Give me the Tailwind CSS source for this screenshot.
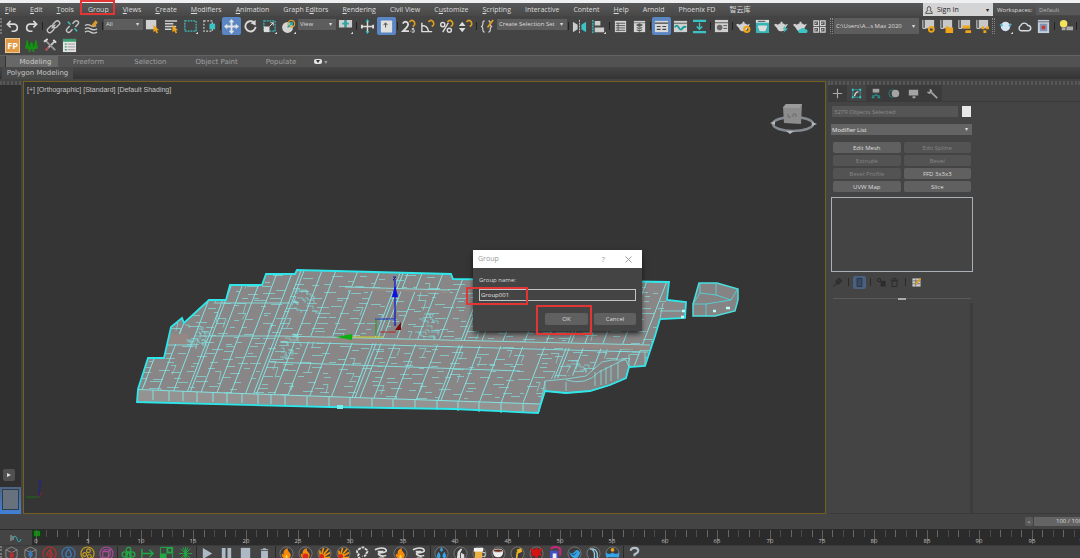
<!DOCTYPE html>
<html lang="en">
<head>
  <meta charset="UTF-8">
  <title>3ds Max - Group</title>
  <script src="https://cdn.jsdelivr.net/npm/@tailwindcss/browser@4"></script>
</head>
<body class="h-screen flex flex-col overflow-hidden bg-[#444] text-[#dcdcdc] font-['Open_Sans','Noto_Sans_CJK_SC',sans-serif] text-[7px] leading-[10px] border-t-3 border-[#eef0f2]">

  <!-- icon symbols -->
  <svg class="hidden" xmlns="http://www.w3.org/2000/svg">
    <defs>
      <symbol id="undo" viewBox="0 0 16 16"><path d="M6 2L2.500 5.500L6 9M3 5.500H10a3.800 3.800 0 0 1 0 7.500H7" fill="none" stroke="#d8d8d8" stroke-width="1.700"/></symbol>
      <symbol id="redo" viewBox="0 0 16 16"><path d="M10 2l3.500 3.500L10 9M13 5.500H6a3.800 3.800 0 0 0 0 7.500H9" fill="none" stroke="#d8d8d8" stroke-width="1.700"/></symbol>
      <symbol id="link" viewBox="0 0 16 16"><g fill="none" stroke="#c4c4c4" stroke-width="1.500"><rect x="7" y="3" width="8" height="5" rx="2.500" transform="rotate(-45 11 5.500)"/><rect x="1" y="8.500" width="8" height="5" rx="2.500" transform="rotate(-45 5 11)"/><path d="M6 10l4-4"/></g></symbol>
      <symbol id="unlink" viewBox="0 0 16 16"><g fill="none" stroke="#c4c4c4" stroke-width="1.500"><path d="M8 5l2.500-2.500a2.200 2.200 0 0 1 3.200 3.200L11 8.500M8 11l-2.500 2.500a2.200 2.200 0 0 1-3.200-3.200L5 7.500"/></g><path d="M3 3l3 3M10 10l3 3" stroke="#3cc" stroke-width="1.500"/></symbol>
      <symbol id="bind" viewBox="0 0 16 16"><path d="M1 7q3-2 6 0t6 0M1 10.500q3-2 6 0t7 0M1 14q3-2 6 0t7 0" fill="none" stroke="#c8c8c8" stroke-width="1.400"/><path d="M8 8l5-6M10 8l4-5" stroke="#d99a2b" stroke-width="2" fill="none"/></symbol>
      <symbol id="pick" viewBox="0 0 16 16"><path d="M1 1h11v10H1z" fill="#d0d0d0"/><path d="M9 6v8l2-1.500 1.500 3 1.500-1-1.500-2.500h2.500z" fill="#f0a518"/></symbol>
      <symbol id="pickname" viewBox="0 0 16 16"><path d="M1 2h13M1 5h9M1 8h12M1 11h7" stroke="#d0d0d0" stroke-width="1.600"/><path d="M9 6v8l2-1.500 1.500 3 1.500-1-1.500-2.500h2.500z" fill="#f0a518"/></symbol>
      <symbol id="rectsel" viewBox="0 0 16 16"><path d="M2 2h12v11H2z" fill="none" stroke="#3cbcbc" stroke-width="1.400" stroke-dasharray="2 1"/><path d="M16 16h-2.500L16 13.500z" fill="#ddd"/></symbol>
      <symbol id="window" viewBox="0 0 16 16"><path d="M2 2h9v11H2z" fill="none" stroke="#ccc" stroke-width="1.300" stroke-dasharray="2 1.500"/><path d="M8 5h6v6H8z" fill="#3cc4c4"/></symbol>
      <symbol id="move" viewBox="0 0 16 16"><path d="M8 0l3 3.500H9V7h3.500V5L16 8l-3.500 3V9H9v3.500h2L8 16l-3-3.500h2V9H3.500v2L0 8l3.500-3v2H7V3.500H5z" fill="#e4e4e4"/></symbol>
      <symbol id="rotate" viewBox="0 0 16 16"><path d="M11.500 3.500a5.500 5.500 0 1 0 2 5" fill="none" stroke="#d8d8d8" stroke-width="2"/><path d="M8 4.500L13.500 1v6z" fill="#d8d8d8"/></symbol>
      <symbol id="scale" viewBox="0 0 16 16"><path d="M2 2h12v11H2z" fill="none" stroke="#3cbcbc" stroke-width="1.300" stroke-dasharray="2 1"/><path d="M2 8h6v6H2z" fill="#ddd"/><path d="M8 8l4-4M9 4h3v3" fill="none" stroke="#ddd"/><path d="M16 16h-2.500L16 13.500z" fill="#ddd"/></symbol>
      <symbol id="place" viewBox="0 0 16 16"><circle cx="7" cy="9" r="5.800" fill="#d4d4d4"/><circle cx="11" cy="5" r="3.500" fill="none" stroke="#d99a2b" stroke-width="1.300"/><path d="M7 9l5-5M9 4h3v3" stroke="#2aa" stroke-width="1.500" fill="none"/><path d="M16 16h-2.500L16 13.500z" fill="#ddd"/></symbol>
      <symbol id="pivot" viewBox="0 0 16 16"><path d="M1 1h6v8H1zM9 1h6v8H9z" fill="#ccc"/><path d="M8 1v8M4.500 5h7" stroke="#2aa" stroke-width="1.800"/><path d="M16 16h-2.500L16 13.500z" fill="#ddd"/></symbol>
      <symbol id="manip" viewBox="0 0 16 16"><path d="M8 2v12M2 8h12" stroke="#ddd" stroke-width="1.500"/><path d="M8 0l2 3H6zM8 16l2-3H6z" fill="#3cc"/><path d="M1 6h2v4H1zM13 6h2v4h-2z" fill="#ddd"/></symbol>
      <symbol id="keys" viewBox="0 0 16 16"><rect x="2" y="1.500" width="12" height="13" rx="1" fill="#e0e0e0"/><path d="M7 9V5M5 6.500L7 4l2 2.500" stroke="#444" fill="none"/></symbol>
      <symbol id="magnet" viewBox="0 0 16 16"><path d="M9 3q3-3 5 0t-1.500 5" fill="none" stroke="#e0a020" stroke-width="1.700"/></symbol>
      <symbol id="snap" viewBox="0 0 16 16"><path d="M2 5q1-2.500 3.500-2t2 3.500Q6.500 9 2 13h6.500" fill="none" stroke="#ddd" stroke-width="1.900"/><path d="M10 13h1M14 10h-2v1.500h2V14h-2.500" stroke="#ddd" fill="none"/><use href="#magnet"/></symbol>
      <symbol id="angle" viewBox="0 0 16 16"><path d="M2 4v9.500h11M2 7q6 0 7 6" fill="none" stroke="#ddd" stroke-width="1.500"/><use href="#magnet"/></symbol>
      <symbol id="percent" viewBox="0 0 16 16"><g fill="none" stroke="#ddd" stroke-width="1.500"><circle cx="4" cy="6" r="2.200"/><circle cx="11" cy="12" r="2.200"/><path d="M10 4L4 14"/></g><use href="#magnet"/></symbol>
      <symbol id="spin" viewBox="0 0 16 16"><path d="M4.500 3L8 7.500H1zM4.500 14L8 9.500H1z" fill="#ddd"/><use href="#magnet"/></symbol>
      <symbol id="named" viewBox="0 0 16 16"><path d="M5 2q-2 0-2 3t-2 3q2 0 2 3t2 3M9 2q2 0 2 3t2 3q-2 0-2 3t-2 3" fill="none" stroke="#ccc" stroke-width="1.300"/><path d="M8 9l6-8" stroke="#e0a020" stroke-width="1.800"/></symbol>
      <symbol id="mirror" viewBox="0 0 16 16"><path d="M1 3l5 3v5l-5 3z" fill="#ccc"/><path d="M8 1v14" stroke="#ccc" stroke-dasharray="2 1"/><path d="M15 3l-5 3v5l5 3z" fill="#3cc4c4"/></symbol>
      <symbol id="align" viewBox="0 0 16 16"><path d="M2 1v14" stroke="#3cc" stroke-width="1.500" stroke-dasharray="2 1"/><path d="M4 2h6v5H4zM4 9h10v5H4z" fill="#ccc"/><path d="M16 16h-2.500L16 13.500z" fill="#ddd"/></symbol>
      <symbol id="list" viewBox="0 0 16 16"><path d="M2 2h12v12H2z" fill="#d4d4d4"/><path d="M3 4.500h10M3 7h10M3 9.500h10M3 12h10M5.500 4v9" stroke="#555"/></symbol>
      <symbol id="layers" viewBox="0 0 16 16"><path d="M2 2h12v12H2z" fill="#d4d4d4"/><path d="M2 4h12" stroke="#777"/><path d="M5 6.500l3-1.500 3 1.500L8 8zM5 9l3 1.500L11 9M5 11.500L8 13l3-1.500" fill="#555" stroke="#555"/></symbol>
      <symbol id="ribbonw" viewBox="0 0 16 16"><path d="M1 2h14v12H1z" fill="#d8d8d8"/><path d="M1 4.500h14M3 8h4M9 8h4M3 11h4M9 11h4" stroke="#444" stroke-width="1.300"/></symbol>
      <symbol id="curve" viewBox="0 0 16 16"><path d="M1 2h14v12H1z" fill="#d0d0d0"/><path d="M1 4.500h14" stroke="#555"/><path d="M2 9q2-4 4 0t4 1 4-1" fill="none" stroke="#1a9c9c" stroke-width="2"/></symbol>
      <symbol id="schema" viewBox="0 0 16 16"><path d="M1 2h14M1 14h14" stroke="#3cc4c4" stroke-width="2.400"/><path d="M8 4v6M5 8l3 3 3-3" fill="none" stroke="#3cc4c4" stroke-width="1.500"/></symbol>
      <symbol id="mat" viewBox="0 0 16 16"><path d="M1 1h14v13H1z" fill="#d0d0d0"/><path d="M1 4h14" stroke="#555"/><circle cx="6" cy="9" r="3" fill="#666"/><path d="M10 7h4M10 10h4" stroke="#555"/></symbol>
      <symbol id="pot" viewBox="0 0 16 16"><path d="M4 6q4-3 8 0l3-1-2.500 4q-.5 4-4.500 4t-4.500-3L0 6l2-1zM7 3h2v2H7z" fill="#d2d2d2"/></symbol>
      <symbol id="potgear" viewBox="0 0 16 16"><use href="#pot"/><circle cx="11.500" cy="11" r="2.800" fill="none" stroke="#f0a518" stroke-width="2.200"/></symbol>
      <symbol id="potwin" viewBox="0 0 16 16"><path d="M1 1h14v14H1z" fill="#35b5b5"/><path d="M1 1h14v3H1z" fill="#ddd"/><path d="M3 2.500h8" stroke="#444"/><path d="M4 7h8l1 1-2 5H5L3 8z" fill="#ddd"/></symbol>
      <symbol id="potbolt" viewBox="0 0 16 16"><use href="#pot"/><path d="M12 7l-3 4h3l-2 4 5-5h-3z" fill="#3cc4c4"/></symbol>
      <symbol id="potcloud" viewBox="0 0 16 16"><use href="#pot"/><path d="M7 15a2 2 0 0 1 1-4 3 3 0 0 1 5 0 2 2 0 0 1 1 4z" fill="#3cc4c4"/></symbol>
      <symbol id="four" viewBox="0 0 16 16"><path d="M2 2h5v5H2zM9 2h5v5H9zM2 9h5v5H2zM9 9h5v5H9z" fill="#555" stroke="#d4d4d4" stroke-width="1.200"/><path d="M3 5l2-1M10 5l2-1M3 12l2-1M10 12l2-1" stroke="#ddd"/></symbol>
      <symbol id="proj" viewBox="0 0 16 16"><path d="M4 1h10v9H4z" fill="#c8c8c8"/><path d="M2 1v9h3" stroke="#ddd" fill="none"/></symbol>
      <symbol id="p1" viewBox="0 0 16 16"><use href="#proj"/><circle cx="11" cy="11" r="2.600" fill="none" stroke="#f0a518" stroke-width="2"/></symbol>
      <symbol id="p2" viewBox="0 0 16 16"><use href="#proj"/><path d="M7 8h3l1 1h4v6H7z" fill="#f0a518"/></symbol>
      <symbol id="p3" viewBox="0 0 16 16"><use href="#proj"/><path d="M6 7h8v3H6zM9 12h6v3H9z" fill="#f0a518"/></symbol>
      <symbol id="p4" viewBox="0 0 16 16"><use href="#proj"/><path d="M7 8h3v3H7zM12 8h3v3h-3zM9 12h3v3H9z" fill="#f0a518"/></symbol>
      <symbol id="ball" viewBox="0 0 16 16"><circle cx="8" cy="8" r="5" fill="#d4e6f4"/><path d="M2 6l3 1M14 5l-2 3" stroke="#5ab" stroke-width="2"/><path d="M16 16h-2.500L16 13.500z" fill="#ddd"/></symbol>
      <symbol id="cloud" viewBox="0 0 16 16"><path d="M4 12.500a3 3 0 0 1 0-5.500 4 4 0 0 1 7.500 0 2.800 2.800 0 0 1 1 5.500z" fill="none" stroke="#d4dce0" stroke-width="1.500"/></symbol>
      <symbol id="rendwin" viewBox="0 0 16 16"><path d="M2 1h12v14H2z" fill="#c4d0dc"/><path d="M2 3h12" stroke="#666"/><path d="M4 5h8v8H4z" fill="#8394b0"/><circle cx="8" cy="9" r="2" fill="#c33"/></symbol>
      <symbol id="bulb" viewBox="0 0 16 16"><circle cx="6" cy="5" r="4" fill="#f3e35c"/><path d="M4 9h4v3H4zM9 8h7v4H9z" fill="#aaa"/></symbol>
      <symbol id="tree" viewBox="0 0 16 16"><path d="M3 1l3 6 2-3 2 3 3-6 1 6 1 4-4 1v3H9v-3H7v3H5v-3l-4-1 1-4z" fill="#189018"/><path d="M5 5l1 4M11 5l-1 4" stroke="#0c5c0c"/></symbol>
      <symbol id="tools" viewBox="0 0 16 16"><path d="M3 13L13 3" stroke="#ccc" stroke-width="2"/><path d="M3 3l10 10" stroke="#999" stroke-width="2"/><path d="M11 2l3 3M1 4l4-3" stroke="#ddd" stroke-width="2"/><path d="M3 13l3-3" stroke="#a44" stroke-width="2"/></symbol>
      <symbol id="sheet" viewBox="0 0 16 16"><path d="M1 1h14v14H1z" fill="#e4e4e4"/><path d="M1 1h14v3H1z" fill="#3a9c6a"/><path d="M3 6.500h2M3 9.500h2M3 12.500h2" stroke="#3a9c6a" stroke-width="1.500"/><path d="M6 6.500h8M6 9.500h8M6 12.500h8" stroke="#999"/></symbol>
      <symbol id="ring" viewBox="0 0 16 16"><circle cx="8" cy="8" r="7" fill="#3c3c3c" stroke="#858585" stroke-width=".8"/></symbol>
      <symbol id="flame" viewBox="0 0 16 16"><path d="M8 14q-6-1-5-6 1 1 2 1-1-5 4-7 0 3 3 6 2 5-4 6z" fill="#f58a0c"/><path d="M8 14q-2.500-2 0-5 2.500 3 0 5z" fill="#ffd23c"/></symbol>
      <symbol id="fl1" viewBox="0 0 16 16"><use href="#ring"/><use href="#flame"/></symbol>
      <symbol id="fl2" viewBox="0 0 16 16"><use href="#ring"/><use href="#flame"/><circle cx="8" cy="11" r="3" fill="#d8281c"/></symbol>
      <symbol id="burst" viewBox="0 0 16 16"><use href="#ring"/><path d="M4 13L3 5M4 13L7 2M4 13l8-10M4 13l10-6M4 13l10-1" stroke="#f5980c" stroke-width="1.800"/><circle cx="5" cy="11" r="2.500" fill="#d8281c"/></symbol>
      <symbol id="smoke" viewBox="0 0 16 16"><path d="M6 14q-4-3-2-5-4-4 1-6 4-3 6 0 4 2 1 5 0 3-4 3" fill="none" stroke="#ddd" stroke-width="2" stroke-dasharray="3 1"/></symbol>
      <symbol id="swirl" viewBox="0 0 16 16"><path d="M1 4q6-3 11-1 3 3-2 4-6 0-5 2 3 3 8 1M4 6h6M5 13h6" fill="none" stroke="#ddd" stroke-width="1.700"/></symbol>
      <symbol id="drops" viewBox="0 0 16 16"><use href="#ring"/><path d="M8 1q3 4 0 5-3-1 0-5zM5 6q4 6 0 7-4-1 0-7zM11 6q4 6 0 7-4-1 0-7z" fill="#36a4e8"/></symbol>
      <symbol id="milk" viewBox="0 0 16 16"><use href="#ring"/><path d="M4 14l1-8 3-3h2l-2 4 4 2v5z" fill="#ddd"/><path d="M8 7v7" stroke="#444"/></symbol>
      <symbol id="beer" viewBox="0 0 16 16"><use href="#ring"/><path d="M3 4h8v10H3z" fill="#eab040"/><path d="M2 2h10v4H2z" fill="#f2f2f2"/><path d="M11 7h3v4h-3" fill="none" stroke="#ddd"/></symbol>
      <symbol id="cup" viewBox="0 0 16 16"><use href="#ring"/><path d="M2 5h11q0 7-5.500 7T2 5z" fill="#eee"/><ellipse cx="7.500" cy="5" rx="5" ry="1.700" fill="#6a2c1a" stroke="#eee" stroke-width=".8"/><path d="M2 14h11" stroke="#ddd"/></symbol>
      <symbol id="honey" viewBox="0 0 16 16"><use href="#ring"/><path d="M7 4l5-2 1 4-4 2z" fill="#f0b420"/><path d="M8 6l-1 7M2 14h12" stroke="#f0b420" stroke-width="1.800" fill="none"/></symbol>
      <symbol id="splat" viewBox="0 0 16 16"><use href="#ring"/><path d="M1 2l5 2 2-3 2 3 5-2-3 5 2 3-4 0-2 5-2-5-4 1 1-4z" fill="#d41414"/></symbol>
      <symbol id="paint" viewBox="0 0 16 16"><path d="M3 3q5-4 10 0v7" fill="none" stroke="#c02878" stroke-width="2.400"/><path d="M2 5h9v10H2z" fill="#4450c0"/><path d="M5 8h4v5H5z" fill="#eee"/></symbol>
      <symbol id="wave" viewBox="0 0 16 16"><use href="#ring"/><path d="M2 6q3 4 6 0 3-4 6 1-1 5-4 6-5 1-8-7z" fill="#36a4e8"/><path d="M5 9q3 2 5-2" stroke="#134c78" fill="none"/></symbol>
      <symbol id="fall" viewBox="0 0 16 16"><use href="#ring"/><path d="M4 3q4 0 5 5v6M6 3q5 0 6 5v6" stroke="#9cd" stroke-width="1.400" fill="none"/></symbol>
      <symbol id="sea" viewBox="0 0 16 16"><use href="#ring"/><circle cx="8" cy="4" r="2" fill="#f0a518"/><path d="M1 7q3.500 3 7 0 3.500 3 7 0v5H1z" fill="#36a4e8"/></symbol>
      <symbol id="help" viewBox="0 0 16 16"><path d="M4 5q0-3 4-3t4 3q0 2-4 4v2M8 13v2" fill="none" stroke="#b4bfcc" stroke-width="2.300"/></symbol>
      <symbol id="cube" viewBox="0 0 16 16"><path d="M8 1l6 3v8l-6 3-6-3V4zM2 4l6 3 6-3M8 7v8" fill="none" stroke="#8c8c8c"/></symbol>
      <symbol id="cubered" viewBox="0 0 16 16"><use href="#cube"/><path d="M8 13q-4-2-1-5 0-2 2-3 0 3 2 4 0 3-3 4z" fill="#b33030"/></symbol>
      <symbol id="cubeblue" viewBox="0 0 16 16"><use href="#cube"/><path d="M8 4q5 7 0 8-5-1 0-8z" fill="#3c78b4"/></symbol>
      <symbol id="cred" viewBox="0 0 16 16"><circle cx="8" cy="8" r="7" fill="none" stroke="#b83030" stroke-width="1.200"/><path d="M5 11q0-4 4-7 0 3 2 5 0 3-3 3M7 11l2-3" fill="none" stroke="#b83030" stroke-width="1.500"/></symbol>
      <symbol id="cblue" viewBox="0 0 16 16"><circle cx="8" cy="8" r="7" fill="none" stroke="#3c78b4" stroke-width="1.200"/><path d="M8 3q6 8 0 9-6-1 0-9z" fill="none" stroke="#3c78b4" stroke-width="1.500"/></symbol>
      <symbol id="cyel" viewBox="0 0 16 16"><g fill="none" stroke="#c8a020" stroke-width="1.200"><circle cx="8" cy="8" r="7"/><circle cx="9" cy="5" r="2"/><circle cx="5" cy="9" r="2"/><circle cx="10" cy="11" r="2"/></g></symbol>
      <symbol id="cpur" viewBox="0 0 16 16"><g fill="none" stroke="#a84c9c" stroke-width="1.200"><circle cx="8" cy="8" r="7"/><path d="M4 6h6v6H4zM6 4h6v6M4 6l2-2M10 6l2-2M10 12l2-2"/></g></symbol>
      <symbol id="clover" viewBox="0 0 16 16"><g fill="none" stroke="#20a844" stroke-width="1.400"><circle cx="8" cy="4" r="2.500"/><circle cx="4" cy="9" r="2.800"/><circle cx="12" cy="9" r="2.800"/><circle cx="8" cy="10" r="2.800"/></g></symbol>
      <symbol id="arrow" viewBox="0 0 16 16"><path d="M2 3v10M2 8h12M10 4l4 4-4 4" fill="none" stroke="#20a844" stroke-width="1.500"/></symbol>
      <symbol id="checker" viewBox="0 0 16 16"><path d="M1.500 1.500h13v13h-13z" fill="none" stroke="#20a844"/><path d="M8 1h7v7H8zM1 8h7v6H1z" fill="#20a844"/><path d="M10 3h3v3h-3z" fill="#444"/></symbol>
      <symbol id="star" viewBox="0 0 16 16"><path d="M8 1v14M1 8h14M3 3l10 10M13 3L3 13M5.500 1.500l5 13M10.500 1.500l-5 13" stroke="#20a844"/></symbol>
      <symbol id="play" viewBox="0 0 16 16"><path d="M3 2l10 6-10 6z" fill="#aeb9c6"/></symbol>
      <symbol id="pause" viewBox="0 0 16 16"><path d="M3 2h4v12H3zM9 2h4v12H9z" fill="#aeb9c6"/></symbol>
      <symbol id="stop" viewBox="0 0 16 16"><path d="M3 2h10v12H3z" fill="#aeb9c6"/></symbol>
      <symbol id="bin" viewBox="0 0 16 16"><path d="M4 4h8M6.500 3h3M5 6h6v8H5z" fill="#aeb9c6" stroke="#aeb9c6" stroke-width="1.300"/></symbol>
      <symbol id="plus" viewBox="0 0 16 16"><path d="M8 3v10M3 8h10" stroke="#aaa" stroke-width="1.200"/></symbol>
      <symbol id="modify" viewBox="0 0 16 16"><path d="M4 4h8v8H4z" fill="none" stroke="#3aa" stroke-width=".8"/><path d="M3 3h2v2H3zM11 3h2v2h-2zM3 11h2v2H3zM11 11h2v2h-2z" fill="#3cc"/><path d="M6 11q0-4 4-5" fill="none" stroke="#ddd" stroke-width="1.500"/></symbol>
      <symbol id="hier" viewBox="0 0 16 16"><path d="M5 3h7v4H5z" fill="#a4a4a4"/><path d="M8.500 7v3M5 12v-2h7v2" fill="none" stroke="#2a8c8c"/><path d="M4 11h3v2H4zM10 11h3v2h-3z" fill="#2a8c8c"/></symbol>
      <symbol id="motion" viewBox="0 0 16 16"><circle cx="6" cy="8" r="4" fill="none" stroke="#2a8080"/><circle cx="9" cy="8" r="4" fill="#a4a4a4"/></symbol>
      <symbol id="display" viewBox="0 0 16 16"><path d="M3 4h10v6H3zM7 11h3v2H7z" fill="#a4a4a4"/></symbol>
      <symbol id="wrench" viewBox="0 0 16 16"><path d="M7 7l6 6" stroke="#a4a4a4" stroke-width="1.800"/><path d="M5 3v3h-3q1 3 4 2 3-2 1-4z" fill="#a4a4a4"/></symbol>
      <symbol id="pin" viewBox="0 0 16 16"><path d="M3 13l4-4M6 7l3 3 4-4-3-3z" stroke="#2c2c2c" fill="#333" stroke-width="1.300"/></symbol>
      <symbol id="tube" viewBox="0 0 16 16"><path d="M5 3h6v10H5z" fill="#3a4a60" stroke="#26303e"/></symbol>
      <symbol id="uniq" viewBox="0 0 16 16"><circle cx="5" cy="5" r="2" fill="none" stroke="#222"/><path d="M7 6h6v7H7z" fill="#2c2c2c"/></symbol>
      <symbol id="trash" viewBox="0 0 16 16"><path d="M3 5h10M6 3h4M5 6h6v7H5z" fill="none" stroke="#2c2c2c" stroke-width="1.200"/></symbol>
      <symbol id="conf" viewBox="0 0 16 16"><path d="M3 3h10v10H3z" fill="#ccc"/><path d="M3 6h10M3 9.500h10M7 4v9" stroke="#666"/><path d="M7 10l6-7" stroke="#e09c18" stroke-width="2"/></symbol>
    </defs>
  </svg>

  <!-- menu bar -->
  <header class="h-[13px] shrink-0 flex items-center bg-linear-to-b from-[#585858] to-[#484848] whitespace-nowrap">
    <nav class="flex gap-[14px] pl-[5px] grow">
      <a href="#"><u>F</u>ile</a><a href="#"><u>E</u>dit</a><a href="#"><u>T</u>ools</a><a href="#"><u>G</u>roup</a><a href="#"><u>V</u>iews</a><a href="#"><u>C</u>reate</a><a href="#"><u>M</u>odifiers</a><a href="#"><u>A</u>nimation</a><a href="#">Graph E<u>d</u>itors</a><a href="#"><u>R</u>endering</a><a href="#">Civil View</a><a href="#">C<u>u</u>stomize</a><a href="#"><u>S</u>cripting</a><a href="#">Interactive</a><a href="#">Content</a><a href="#"><u>H</u>elp</a><a href="#">Arnold</a><a href="#">Phoenix FD</a><a href="#">智云库</a>
    </nav>
    <button class="w-[70px] h-full bg-[#d4d4d4] text-[#222] flex items-center gap-1 pl-[2px] pr-1">
      <svg class="size-2" viewBox="0 0 8 8"><path d="M4 .6a1.800 2.200 0 0 1 1 4q2.300.4 2.300 2.800H.7Q.7 5 3 4.600A1.800 2.200 0 0 1 4 .6z" fill="none" stroke="#333" stroke-width=".8"/></svg>
      <span class="grow text-left">Sign In</span><span class="text-[6px]">▾</span>
    </button>
    <label for="ws" class="w-[43px] pl-1 text-[6px]">Workspaces:</label>
    <select id="ws" class="appearance-none w-[44px] h-[11px] pl-[3px] bg-[#585858] text-[6px] text-[#b4b4b4]"><option>Default</option></select>
  </header>

  <!-- main toolbar -->
  <div class="h-5 shrink-0 flex items-center [&>button]:w-[19px] [&>button]:h-[18px] [&>button]:shrink-0 [&>button]:flex [&>button]:items-center [&>button]:justify-center [&_button_svg]:size-[15px] [&>i]:w-px [&>i]:h-2 [&>i]:mx-px [&>i]:bg-[#222] [&>i]:shrink-0 [&>label]:relative [&>label]:shrink-0 [&_select]:appearance-none [&_select]:w-full [&_select]:h-[11px] [&_select]:bg-[#5d5d5d] [&_select]:text-[6px] [&_select]:pl-[2px] [&_select]:block [&_label_span]:absolute [&_label_span]:right-1 [&_label_span]:top-0 [&_label_span]:text-[6px]">
    <div class="w-[3px] h-4 shrink-0 border-l-2 border-dotted border-[#777]"></div>
    <button aria-label="Undo"><svg><use href="#undo"/></svg></button>
    <button aria-label="Redo"><svg><use href="#redo"/></svg></button>
    <i></i>
    <button aria-label="Link"><svg><use href="#link"/></svg></button>
    <button aria-label="Unlink"><svg><use href="#unlink"/></svg></button>
    <button aria-label="Bind"><svg><use href="#bind"/></svg></button>
    <i></i>
    <label class="w-[39px] -mt-1"><select aria-label="Filter"><option>All</option></select><span>▾</span></label>
    <button aria-label="Select"><svg><use href="#pick"/></svg></button>
    <button aria-label="Select by Name"><svg><use href="#pickname"/></svg></button>
    <button aria-label="Region"><svg><use href="#rectsel"/></svg></button>
    <button aria-label="Window"><svg><use href="#window"/></svg></button>
    <i></i>
    <button aria-label="Move" class="bg-[#5a86c4] rounded-xs"><svg><use href="#move"/></svg></button>
    <button aria-label="Rotate"><svg><use href="#rotate"/></svg></button>
    <button aria-label="Scale"><svg><use href="#scale"/></svg></button>
    <button aria-label="Place"><svg><use href="#place"/></svg></button>
    <label class="w-[38px] -mt-1"><select aria-label="Coordinates"><option>View</option></select><span>▾</span></label>
    <button aria-label="Pivot"><svg><use href="#pivot"/></svg></button>
    <i></i>
    <button aria-label="Manipulate"><svg><use href="#manip"/></svg></button>
    <button aria-label="Keyboard" class="bg-[#5a86c4] rounded-xs"><svg><use href="#keys"/></svg></button>
    <i></i>
    <button aria-label="Snaps"><svg><use href="#snap"/></svg></button>
    <button aria-label="Angle Snap"><svg><use href="#angle"/></svg></button>
    <button aria-label="Percent Snap"><svg><use href="#percent"/></svg></button>
    <button aria-label="Spinner Snap"><svg><use href="#spin"/></svg></button>
    <i></i>
    <button aria-label="Named Sets"><svg><use href="#named"/></svg></button>
    <label class="w-[70px] -mt-1"><select aria-label="Selection Set"><option>Create Selection Set</option></select><span>▾</span></label>
    <i></i>
    <button aria-label="Mirror"><svg><use href="#mirror"/></svg></button>
    <button aria-label="Align"><svg><use href="#align"/></svg></button>
    <i></i>
    <button aria-label="Scene Explorer"><svg><use href="#list"/></svg></button>
    <button aria-label="Layers"><svg><use href="#layers"/></svg></button>
    <i></i>
    <button aria-label="Ribbon" class="bg-[#5a86c4] rounded-xs"><svg><use href="#ribbonw"/></svg></button>
    <button aria-label="Curve Editor"><svg><use href="#curve"/></svg></button>
    <button aria-label="Schematic"><svg><use href="#schema"/></svg></button>
    <i></i>
    <button aria-label="Materials"><svg><use href="#mat"/></svg></button>
    <i></i>
    <button aria-label="Render Setup"><svg><use href="#potgear"/></svg></button>
    <button aria-label="Frame Window"><svg><use href="#potwin"/></svg></button>
    <button aria-label="Render"><svg><use href="#potbolt"/></svg></button>
    <button aria-label="Cloud Render"><svg><use href="#potcloud"/></svg></button>
    <button aria-label="Gallery"><svg><use href="#four"/></svg></button>
    <div class="w-[3px] mx-px h-4 shrink-0 border-x border-dotted border-[#888]"></div>
    <label class="w-[85px]"><select aria-label="Project" class="h-4!"><option>C:\Users\A...s Max 2020</option></select><span class="top-[3px]!">▾</span></label>
    <button aria-label="Project" class="w-[18px]!"><svg><use href="#p1"/></svg></button>
    <button aria-label="Open" class="w-[18px]!"><svg><use href="#p2"/></svg></button>
    <button aria-label="Assets" class="w-[18px]!"><svg><use href="#p3"/></svg></button>
    <button aria-label="Structure" class="w-[18px]!"><svg><use href="#p4"/></svg></button>
    <div class="w-[3px] mx-px h-4 shrink-0 border-x border-dotted border-[#888]"></div>
    <button aria-label="Ball"><svg><use href="#ball"/></svg></button>
    <button aria-label="Cloud"><svg><use href="#cloud"/></svg></button>
    <button aria-label="Preview"><svg><use href="#rendwin"/></svg></button>
    <i></i>
    <button aria-label="Light"><svg><use href="#bulb"/></svg></button>
    <i></i>
  </div>

  <div class="h-[19px] shrink-0 flex items-center gap-1 pl-[5px] [&_svg]:size-[15px]">
    <button class="size-[15px] bg-[#e09a48] border border-[#f0c890] text-white text-[9px] font-bold leading-[12px]">FP</button>
    <button aria-label="Forest"><svg><use href="#tree"/></svg></button>
    <button aria-label="Tools"><svg><use href="#tools"/></svg></button>
    <button aria-label="Sheet"><svg><use href="#sheet"/></svg></button>
  </div>

  <!-- ribbon -->
  <div class="h-3 shrink-0 flex items-end bg-[#525252] border-t border-[#636363] font-['DejaVu_Sans',sans-serif] text-[#a0a0a0] pl-[5px]">
    <button class="w-[53px] h-[11px] pl-[7px] bg-[#686868] text-[#c8c8c8] border-l border-[#333]">Modeling</button>
    <button class="ml-[15px]">Freeform</button>
    <button class="ml-[30px]">Selection</button>
    <button class="ml-[29px]">Object Paint</button>
    <button class="ml-[28px]">Populate</button>
    <button class="ml-[18px] mb-[3px] w-2 h-[5px] bg-[#e4e4e4] rounded-xs flex justify-center" aria-label="Minimize"><svg class="w-1 h-1" viewBox="0 0 4 4"><path d="M0 1h4L2 4z" fill="#333"/></svg></button>
    <span class="ml-[2px] text-[6px]">▾</span>
  </div>
  <div class="h-3 shrink-0 bg-linear-to-b from-[#464646] to-[#343434] flex font-['DejaVu_Sans',sans-serif]">
    <button class="w-[71px] ml-[2px] bg-[#494949] text-[#c4c4c4]">Polygon Modeling</button>
  </div>

  <main class="grow min-h-0 flex pt-[2px]">
    <aside class="w-[21px] mr-[2px] shrink-0 bg-[#303030] flex flex-col">
      <div class="h-1 border-y-2 border-dotted border-[#565656] bg-[#444]"></div>
      <div class="grow flex items-end px-[3px] pb-[6px]">
        <button class="size-3 bg-[#505050] rounded-xs flex items-center justify-center" aria-label="Expand"><svg class="size-1" viewBox="0 0 4 4"><path d="M0 0l4 2-4 2z" fill="#ddd"/></svg></button>
      </div>
      <button aria-label="Layout" class="h-[27px] bg-linear-to-b from-[#4f6480] to-[#4080d8] p-[2px] pb-[4px]"><span class="block h-full border border-[#2e3c50] bg-[#68717e]"></span></button>
    </aside>

    <!-- viewport -->
    <section class="grow relative bg-[#353535] border border-[#75611f] min-w-0">
      <div class="absolute left-[3px] top-[3px] font-['Liberation_Sans',sans-serif] text-[#c4c4c4] whitespace-nowrap">[+] [Orthographic] [Standard] [Default Shading]</div>
      <svg class="w-full h-full" viewBox="24 82 801 431">
        <defs><clipPath id="top"><path d="M138 389L148 358H164L171 327L182 318L184 323L209 300H226L230 285H262L266 274H295L297 270L451 274L453 279L669 282L667 300L645 365L629 366L545 380L540 403L227 394z"/></clipPath></defs>
        <path d="M137 402L138 389L148 358H164L171 327L182 318L184 323L209 300H226L230 285H262L266 274H295L297 270L451 274L453 279L669 282L667 300L686 302L685 318L660 319L655 336L645 366L629 367L626 378L610 385L590 391L566 393L545 391L538 413L455 409L330 407z" fill="#888686"/>
        <g id="mesh" clip-path="url(#top)" fill="none" stroke="#84e2e2"></g>
        <g fill="#858383" stroke="#84e2e2" stroke-width=".8">
          <path d="M545 381l21-2 20-3 16-14 10-2h14l3 7-3 11-16 7-20 6-24 2-21-2z"/>
          <path d="M566 380q20 6 33-8l28-14M595 372v14M601 370v15M606 367v17M611 365v16M618 362v17M566 382v9" fill="none"/>
          <path d="M629 354v12M645 352v14M632 352h16M545 381l-6 31" fill="none"/>
          <path d="M660 311h24M663 303l-3 15" fill="none"/>
        </g>
        <g id="front" stroke="#84e2e2" fill="none"></g>
        <path d="M137 402L138 389L148 358H164L171 327L182 318L184 323L209 300H226L230 285H262L266 274H295L297 270L451 274L453 279L669 282L667 300L686 302L685 318L660 319L655 336L645 366L629 367L626 378L610 385L590 391L566 393L545 391L538 413L455 409L330 407z" fill="none" stroke="#2fe6ea" stroke-width="1.800"/>
        <g stroke="#49e0e2" fill="#858383"><path d="M699 283h18l21 6v11l-3 11-20 5H693v-12z" stroke-width="1.500"/><path d="M700 284v9l-7 11h13l25-4 6-10M706 304v12M700 293l16 2 15 5M716 284v11" fill="none" stroke-width=".8"/></g>
        <path d="M713 311h3M726 308h4M682 311h3M681 317h3" stroke="#bff" stroke-width="2.500"/><path d="M337 407h6" stroke="#7ee" stroke-width="4"/>
        <!-- move gizmo -->
        <path d="M395 281v45" stroke="#1616c8" stroke-width="1.300"/><path d="M395 285l3 12h-6z" fill="#1010e0"/><path d="M393 277h3l-3 3h3" stroke="#1616a8" fill="none"/>
        <path d="M375 319h20" stroke="#2020b8"/><path d="M376 319v17" stroke="#1b9c2b"/><path d="M380 332h16" stroke="#b82020"/>
        <path d="M353 337h30" stroke="#d8d020"/><path d="M336 337l16-3v6z" fill="#0cb010"/>
        <path d="M395 330l6-8v8z" fill="#7a0c0c"/>
        <!-- axis tripod -->
        <path d="M39 497l1-12" stroke="#2020a0"/><path d="M26 497h13" stroke="#157015"/><path d="M39 497l3-5" stroke="#902020"/><path d="M38 481h3l-2 3h3" stroke="#2020a0" fill="none" stroke-width=".8"/>
        <!-- view cube -->
        <ellipse cx="793" cy="124" rx="20" ry="7" fill="none" stroke="#858a90" stroke-width="2.500"/>
        <path d="M770 123l5-2v4zM817 124l-5-2v4zM786 131h8l-4 3z" fill="#b4b8bc"/>
        <path d="M786 104h16l-1 20-17-1-1-16z" fill="#8c8c8c"/><path d="M786 104l-3 4h16l3-4z" fill="#9b9b9b"/><path d="M788 114v3h3M793 117v-3h3v3" stroke="#666" stroke-width=".8" fill="none"/>
      </svg>
    </section>

    <!-- command panel -->
    <aside class="w-[254px] shrink-0 flex flex-col pl-[2px]">
      <div class="h-1 border-y-2 border-dotted border-[#565656]"></div>
      <div class="h-[17px] flex border-b border-[#3a3a3a] [&>button]:w-[19px] [&>button]:bg-[#3b3b3b] [&>button]:flex [&>button]:items-center [&>button]:justify-center [&_svg]:size-[15px] [&>button]:pt-px">
        <button aria-label="Create"><svg><use href="#plus"/></svg></button>
        <button aria-label="Modify" class="bg-[#444]!"><svg><use href="#modify"/></svg></button>
        <button aria-label="Hierarchy"><svg><use href="#hier"/></svg></button>
        <button aria-label="Motion"><svg><use href="#motion"/></svg></button>
        <button aria-label="Display"><svg><use href="#display"/></svg></button>
        <button aria-label="Utilities"><svg><use href="#wrench"/></svg></button>
      </div>
      <div class="w-[145px] grow flex flex-col pl-[3px] pt-1 text-[6px]">
        <div class="flex gap-1 pl-px">
          <input aria-label="Object name" value="3279 Objects Selected" class="w-[126px] h-[11px] bg-[#555] text-[#8c8c8c] px-[2px]">
          <button aria-label="Object color" class="w-[9px] h-[11px] bg-[#e8e8e8]"></button>
        </div>
        <label class="relative block mt-[7px] mr-px"><select aria-label="Modifier List" class="appearance-none block w-full h-[11px] bg-[#646464] pl-px text-[#e4e4e4]"><option>Modifier List</option></select><span class="absolute right-1 top-0">▾</span></label>
        <div class="grid grid-cols-2 gap-x-[3px] gap-y-[2px] mt-[7px] mx-[2px] [&>button]:h-[11px] [&>button]:bg-[#606060] [&>button]:rounded-xs [&>button]:leading-[10px] [&>button]:disabled:bg-[#535353] [&>button]:disabled:text-[#858585]">
          <button>Edit Mesh</button><button disabled>Edit Spline</button>
          <button disabled>Extrude</button><button disabled>Bevel</button>
          <button disabled>Bevel Profile</button><button>FFD 3x3x3</button>
          <button>UVW Map</button><button>Slice</button>
        </div>
        <div class="h-[75px] mt-[5px] border border-[#aab0b6]"></div>
        <div class="flex items-center mt-[3px] h-[14px] [&>i]:w-px [&>i]:h-2 [&>i]:bg-[#2a2a2a] [&>i]:mx-1 [&_svg]:size-[13px]">
          <button aria-label="Pin"><svg><use href="#pin"/></svg></button><i></i>
          <button aria-label="Show result" class="bg-[#4a6080] rounded-xs"><svg><use href="#tube"/></svg></button><i></i>
          <button aria-label="Make unique"><svg><use href="#uniq"/></svg></button>
          <button aria-label="Remove"><svg><use href="#trash"/></svg></button><i></i>
          <button aria-label="Configure"><svg><use href="#conf"/></svg></button>
        </div>
        <div class="mt-[9px] mx-[2px] h-px bg-[#5a5a5a] flex items-center justify-center"><span class="w-2 h-[2px] shrink-0 bg-[#aaa]"></span></div>
        <div class="mt-1 grow border-r-3 border-[#3c3c3c]"></div>
      </div>
      <div class="h-px bg-[#3a3a3a]"></div>
    </aside>
  </main>

  <!-- time slider -->
  <div class="h-[15px] shrink-0 flex justify-end items-center gap-px text-[6px]">
    <button class="w-2 h-[9px] bg-[#5a5a5a] rounded-xs leading-[8px]">&lt;</button>
    <button class="w-[46px] h-[9px] bg-[#646464] pl-[22px] text-left whitespace-nowrap overflow-hidden leading-[9px]">100 / 100</button>
  </div>
  <div class="h-4 shrink-0 flex border-t border-[#2a2a2a]">
    <button aria-label="Mini curve editor" class="w-8 shrink-0 flex items-center justify-center"><svg class="w-3 h-2" viewBox="0 0 12 8"><path d="M1 1v6M3 2v4" stroke="#aaa"/><path d="M3 5q2-6 4 0t4 0" fill="none" stroke="#3aa"/></svg></button>
    <svg id="track" class="grow min-w-0 h-[15px] bg-[#2b2b2b] font-['Open_Sans',sans-serif] text-[6px]"><rect x="1" y="0" width="8" height="7" fill="#054a05"/><rect x="2" y="1" width="6" height="5" fill="#0c8c0c"/></svg>
  </div>

  <!-- simulation toolbar -->
  <div class="h-[13px] shrink-0 overflow-hidden flex items-start border-t border-[#3a3a3a] [&>button]:w-[19px] [&>button]:shrink-0 [&>button]:flex [&>button]:justify-center [&_svg]:size-[15px] [&>i]:w-px [&>i]:h-3 [&>i]:mx-px [&>i]:bg-[#2a2a2a]">
    <div class="w-[2px] h-3 border-l-2 border-dotted border-[#777]"></div>
    <button aria-label="Fire preset"><svg><use href="#cubered"/></svg></button>
    <button aria-label="Liquid preset"><svg><use href="#cubeblue"/></svg></button>
    <button aria-label="Fire source"><svg><use href="#cred"/></svg></button>
    <button aria-label="Liquid source"><svg><use href="#cblue"/></svg></button>
    <button aria-label="Particles"><svg><use href="#cyel"/></svg></button>
    <button aria-label="Mesher"><svg><use href="#cpur"/></svg></button>
    <i></i>
    <button aria-label="Turbulence"><svg><use href="#clover"/></svg></button>
    <button aria-label="Force"><svg><use href="#arrow"/></svg></button>
    <button aria-label="Mapper"><svg><use href="#checker"/></svg></button>
    <button aria-label="Body force"><svg><use href="#star"/></svg></button>
    <i></i>
    <button aria-label="Start"><svg><use href="#play"/></svg></button>
    <button aria-label="Pause"><svg><use href="#pause"/></svg></button>
    <button aria-label="Stop"><svg><use href="#stop"/></svg></button>
    <button aria-label="Delete"><svg><use href="#bin"/></svg></button>
    <i></i>
    <button aria-label="Fire"><svg><use href="#fl1"/></svg></button>
    <button aria-label="Burning"><svg><use href="#fl2"/></svg></button>
    <button aria-label="Explosion"><svg><use href="#burst"/></svg></button>
    <button aria-label="Large explosion"><svg><use href="#burst"/></svg></button>
    <button aria-label="Smoke"><svg><use href="#smoke"/></svg></button>
    <button aria-label="Cold smoke"><svg><use href="#swirl"/></svg></button>
    <button aria-label="Candle"><svg><use href="#fl1"/></svg></button>
    <button aria-label="Clouds"><svg><use href="#swirl"/></svg></button>
    <i></i>
    <button aria-label="Water"><svg><use href="#drops"/></svg></button>
    <button aria-label="Milk"><svg><use href="#milk"/></svg></button>
    <button aria-label="Beer"><svg><use href="#beer"/></svg></button>
    <button aria-label="Coffee"><svg><use href="#cup"/></svg></button>
    <button aria-label="Honey"><svg><use href="#honey"/></svg></button>
    <button aria-label="Blood"><svg><use href="#splat"/></svg></button>
    <button aria-label="Paint"><svg><use href="#paint"/></svg></button>
    <button aria-label="Waves"><svg><use href="#wave"/></svg></button>
    <button aria-label="Waterfall"><svg><use href="#fall"/></svg></button>
    <button aria-label="Ocean"><svg><use href="#sea"/></svg></button>
    <i></i>
    <button aria-label="Help"><svg><use href="#help"/></svg></button>
  </div>

  <!-- group dialog -->
  <form class="absolute left-[473px] top-[250px] w-[169px] bg-[#444] shadow-md shadow-black/60 text-[6px]">
    <div class="h-[18px] bg-white text-[#999] flex items-center pl-[5px] pr-[10px]">
      <h2 class="grow text-[7px]">Group</h2>
      <button type="button" class="text-[8px] mr-5">?</button>
      <button type="button" aria-label="Close"><svg class="size-[7px]" viewBox="0 0 7 7"><path d="M.5.5l6 6M6.500.5l-6 6" stroke="#888" stroke-width=".8"/></svg></button>
    </div>
    <div class="px-[6px] pt-[7px] pb-[6px]">
      <label for="gname" class="block">Group name:</label>
      <input id="gname" value="Group001" class="block w-full h-3 mt-1 bg-[#444] border border-[#c4c4c4] px-px text-[#e4e4e4]">
      <div class="flex justify-end gap-[6px] mt-3">
        <button class="w-[43px] h-3 bg-[#606060] rounded-xs">OK</button>
        <button type="button" class="w-[42px] h-3 bg-[#606060] rounded-xs">Cancel</button>
      </div>
    </div>
  </form>

  <!-- step highlights -->
  <div class="absolute left-[80px] top-0 w-[35px] h-[15px] border-2 border-[#e23535]"></div>
  <div class="absolute left-[466px] top-[287px] w-[62px] h-[18px] border-2 border-[#e23535]"></div>
  <div class="absolute left-[536px] top-[305px] w-[56px] h-[30px] border-2 border-[#e23535]"></div>

  <script>
    const NS = "http://www.w3.org/2000/svg";
    function add(parent, tag, attrs, text) {
      const el = document.createElementNS(NS, tag);
      for (const k in attrs) el.setAttribute(k, attrs[k]);
      if (text) el.textContent = text;
      parent.appendChild(el);
    }

    // frame ticks
    const track = document.getElementById("track");
    for (let f = 0; f <= 100; f++) {
      const x = Math.round(4 + f * 10.48);
      add(track, "path", { d: `M${x + .5} 0v${f % 5 ? 7 : 14}`, stroke: f % 5 ? (f % 2 ? "#4c4c4c" : "#686868") : "#606060" });
      if (f % 5 === 0) add(track, "text", { x: x, y: 13, "text-anchor": "middle", fill: f === 100 ? "#4a7cc0" : "#c0c0c0" }, String(f));
    }

    // building mesh
    let seed = 7;
    const rnd = () => (seed = (seed * 16807) % 2147483647) / 2147483647;
    const mesh = document.getElementById("mesh");
    let main = "", fine = "", bright = "";
    const xs = [137, 153, 169, 183, 197, 213, 227, 242, 250, 271, 285, 307, 329, 350, 358, 372, 393, 415, 437, 458, 479, 501, 523, 545, 562, 580, 600, 620];
    xs.forEach((x, i) => {
      main += `M${x} 403L${x + 52} 268`;
      if (i % 5 === 3) main += `M${x + 3} 403L${x + 55} 268`;
    });
    for (let y = 275; y < 400; y += 5) {
      for (let x = 140 + rnd() * 12; x < 660; x += 11 + rnd() * 20) {
        const w = 4 + rnd() * 8, yy = Math.round(y + rnd() * 4);
        fine += `M${Math.round(x)} ${yy}.5h${Math.round(w)}`;
        if (rnd() > .85) fine += `l-${2 + Math.round(rnd() * 2)} ${6 + Math.round(rnd() * 4)}`;
      }
    }
    for (let i = 0; i < 90; i++) {
      const cx = [303, 195, 425, 290, 575][i % 5], cy = [300, 336, 325, 345, 372][i % 5];
      bright += `M${Math.round(cx + rnd() * 20 - 10)} ${Math.round(cy + rnd() * 24 - 12)}h${Math.round(2 + rnd() * 5)}v3`;
    }
    add(mesh, "path", { d: main, "stroke-width": 1 });
    add(mesh, "path", { d: fine, "stroke-width": .9, "stroke-opacity": .75 });
    add(mesh, "path", { d: "M280 335L650 345V350L280 341zM345 287L450 290V293L345 290zM168 334H188V344H166z", fill: "#938884", stroke: "none" });
    add(mesh, "path", { d: bright, "stroke-width": .8, "stroke-opacity": .8 });
    add(mesh, "path", { d: "M166 345H190M200 336H280L650 345M280 342L640 352M345 287L450 290M215 303H290M270 362L520 371", "stroke-width": .9 });
    let face = "M138 389.500L227 393L540 404";
    [153, 169, 183, 197, 213, 227, 242, 258, 271, 285, 307, 329, 350, 372, 393, 415, 437, 458, 479, 501, 523].forEach(x => {
      const y = Math.round(389.5 + (x - 138) * .036);
      face += `M${x} ${y}V${y + 10}`;
    });
    add(document.getElementById("front"), "path", { d: "M138 390L227 393L540 404L538 412L455 408L330 406L138 401z", fill: "#959391", stroke: "none" });
    add(document.getElementById("front"), "path", { d: face });
  </script>
</body>
</html>
